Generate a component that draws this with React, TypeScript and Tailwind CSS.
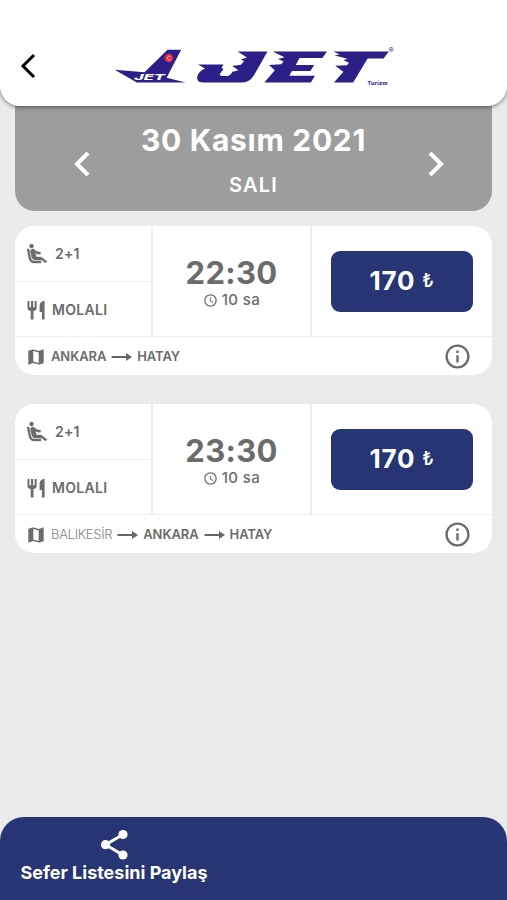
import clsx from 'clsx';
import { MdAccessTime, MdInfoOutline } from 'react-icons/md';

type Stop = { name: string; passed?: boolean };
type Trip = { time: string; duration: string; seats: string; price: string; stops: Stop[] };

const trips: Trip[] = [
  {
    time: '22:30',
    duration: '10 sa',
    seats: '2+1',
    price: '170',
    stops: [{ name: 'ANKARA' }, { name: 'HATAY' }],
  },
  {
    time: '23:30',
    duration: '10 sa',
    seats: '2+1',
    price: '170',
    stops: [{ name: 'BALIKESİR', passed: true }, { name: 'ANKARA' }, { name: 'HATAY' }],
  },
];

function Logo() {
  return (
    <svg width="290" height="48" viewBox="110 42 290 48" fill="#2c1f87">
      {/* Tail fin */}
      <path d="M114.7 69.8 L144.5 72.2 L167.5 49.8 H181.2 L166.6 77.8 L185.7 82.5 H136.8 Z" />
      <circle cx="168.8" cy="58" r="4.3" fill="#e0303a" />
      <path d="M170.6 56.6a2 2 0 1 0 .2 2.8" fill="none" stroke="#fff" strokeWidth="0.8" opacity="0.7" />
      <text
        x="134"
        y="79.8"
        fill="#fff"
        fontSize="8"
        fontWeight="800"
        fontStyle="italic"
        fontFamily="Inter, sans-serif"
        textLength="31"
        lengthAdjust="spacingAndGlyphs"
      >
        JET
      </text>
      {/* Wordmark */}
      <path d="M198 64.4 H223.5 L221.5 68 L223.5 69 L219.8 74.2 Q219.5 76 222 76 H228 Q230 75.8 232.5 71.8 L238.5 70.3 L232.2 66 L241 64.8 L244 61 L241 59.5 L247 57.5 L237.5 51.5 H267.5 L253.5 76 Q249.5 82.6 241 82.6 H204 Q196 82.6 197.3 76.5 Q198.5 71.5 205 68.6 Z" />
      <path d="M272.7 51.5 H327 L322.4 58 H299.5 L295.8 65 H314.2 L310.4 71 H292 L289.3 75.8 H315 L310.8 82.4 H264.4 L274.8 70.2 L269 65 L281.3 64.2 L283.5 61.5 L278 59 L284.5 57.2 Z" />
      <path d="M333.5 51.5 H388.8 L383.6 58.5 H367.6 L353.2 82.6 H334 L343.4 71.8 L335.2 65.8 L347 65.2 L349 62.8 L343.5 60.3 L347.5 58.8 L334.5 55.5 L339.5 54.5 Z" />
      <text x="367.5" y="85.3" fontSize="5.4" fontWeight="800" fontFamily="Inter, sans-serif" textLength="20">
        Turizm
      </text>
      <text x="388.8" y="53.2" fontSize="7" fontWeight="600" fontFamily="Inter, sans-serif">
        ®
      </text>
    </svg>
  );
}

function Chevron({ className, weight = 3.4 }: { className?: string; weight?: number }) {
  return (
    <svg className={className} width="16" height="26" viewBox="0 0 16 26" fill="none" stroke="currentColor" strokeWidth={weight}>
      <path d="M14 2 L3 13 L14 24" />
    </svg>
  );
}

function SeatIcon() {
  return (
    <svg width="24" height="24" viewBox="0 0 24 24" fill="#6d6d6d" stroke="#6d6d6d" strokeWidth="0.4">
      <path d="M5.35 5.64c-.9-.64-1.12-1.88-.49-2.79.63-.9 1.88-1.12 2.79-.49.9.64 1.12 1.88.49 2.79-.64.9-1.88 1.12-2.79.49zM16 19H8.93c-1.48 0-2.74-1.08-2.96-2.54L4 7H2l1.99 9.76C4.37 19.2 6.47 21 8.94 21H16v-2zm.23-4h-4.88l-1.03-4.1c1.58.89 3.28 1.54 5.15 1.22V9.99c-1.63.31-3.44-.27-4.69-1.25L9.14 7.47c-.23-.18-.49-.3-.76-.38-.32-.09-.66-.12-.99-.06h-.02c-1.23.22-2.05 1.39-1.84 2.61l1.35 5.92C7.16 16.98 8.39 18 9.83 18h6.85l3.82 3 1.5-1.5-5.77-4.5z" />
    </svg>
  );
}

function CutleryIcon() {
  return (
    <svg width="18" height="20" viewBox="0 0 18 20" fill="#6d6d6d">
      <path d="M.5 1h2v6.200h1.500V1h2.200v6.200h1.500V1h2v7c0 1.600-1.200 2.700-3.200 3v8.400H3.700V11C1.700 10.700.500 9.600.500 8Z" />
      <path d="M17.600.800v18.600h-2.700V12h-2.300V6C12.600 3.200 14.800.900 17.600.800Z" />
    </svg>
  );
}

function MapIcon() {
  return (
    <svg width="16" height="16" viewBox="0 0 16 16" fill="none" stroke="#6d6d6d" strokeWidth="1.5">
      <path d="M.3 1.800 5.300.300V14L.300 15.700ZM10.700 2 15.700.300V14.200L10.700 15.700Z" fill="#6d6d6d" stroke="none" />
      <path d="M5 1.100 11 2.800M5 13.200 11 14.900" />
    </svg>
  );
}

function RouteArrow() {
  return (
    <svg width="21" height="10" viewBox="0 0 21 10" fill="#666">
      <path d="M.5 3.900h14.500V.900L21 5l-6 4.100v-3H.500Z" />
    </svg>
  );
}

function TripCard({ trip }: { trip: Trip }) {
  return (
    <div className="h-[149px] overflow-hidden rounded-[19px] bg-white text-[#6b6b6b]">
      <div className="flex h-[111px] border-b border-[#eeeeee]">
        <div className="w-[138px] border-r-2 border-[#eeeeee]">
          <div className="flex h-14 items-center border-b border-[#eeeeee] pl-[10px]">
            <SeatIcon />
            <span className="ml-[6px] text-[14px] font-semibold tracking-[0.2px]">{trip.seats}</span>
          </div>
          <div className="flex h-[55px] items-center pl-3">
            <CutleryIcon />
            <span className="ml-[7px] text-[14px] font-semibold tracking-[0.3px]">MOLALI</span>
          </div>
        </div>

        <div className="flex w-[159px] flex-col items-center border-r-2 border-[#eeeeee] pt-[28px]">
          <div className="h-9 text-[31px] font-bold leading-[38px] tracking-[0.3px]">{trip.time}</div>
          <div className="flex items-center gap-1 text-[15px] font-medium leading-5 tracking-[0.4px]">
            <MdAccessTime size={15} />
            {trip.duration}
          </div>
        </div>

        <div className="flex flex-1 items-start pl-[19px] pt-[25px]">
          <button className="flex h-[61px] w-[142px] items-center justify-center rounded-[9px] bg-[#273574] pb-[2px] text-[26px] font-bold tracking-[0.7px] text-white">
            {trip.price}
            <span className="ml-[7px] mt-[2px] text-[19px] font-medium">₺</span>
          </button>
        </div>
      </div>

      <div className="flex h-[38px] items-center pl-[13px] pr-5 pt-px">
        <MapIcon />
        <div className="ml-[7px] flex items-center gap-[5px] text-[13px]">
          {trip.stops.map((stop, i) => (
            <div key={stop.name} className="flex items-center gap-[5px]">
              {i > 0 && <RouteArrow />}
              <span className={clsx(stop.passed ? 'font-light tracking-[-0.3px] text-[#858585]' : 'font-semibold tracking-[-0.1px]')}>
                {stop.name}
              </span>
            </div>
          ))}
        </div>
        <MdInfoOutline size={29} className="ml-auto" />
      </div>
    </div>
  );
}

export default function App() {
  return (
    <div className="flex h-[900px] w-[507px] flex-col overflow-hidden bg-[#ebebeb] font-['Inter',sans-serif]">
      <header className="z-10 flex h-[106px] shrink-0 items-start rounded-b-[20px] bg-white shadow-[0_1px_4px_rgba(0,0,0,0.5)]">
        <Chevron className="ml-5 mt-[53px] text-black" weight={3} />
        <div className="ml-[74px] mt-[42px]">
          <Logo />
        </div>
      </header>

      {/* Day picker */}
      <div className="mx-[15px] flex h-[105px] shrink-0 items-center justify-between rounded-b-[20px] bg-[#9d9d9d] pl-[59px] pr-[48px] text-white">
        <Chevron className="mt-[10px]" weight={4} />
        <div className="mr-[11px] mt-[2px] text-center">
          <div className="text-[30px] font-bold leading-9 tracking-[0.7px]">30 Kasım 2021</div>
          <div className="mt-[15px] text-[20px] font-semibold leading-6 tracking-[1.2px]">SALI</div>
        </div>
        <Chevron className="mt-[10px] rotate-180" weight={4} />
      </div>

      <main className="flex flex-1 flex-col gap-[29px] px-[15px] pt-[15px]">
        {trips.map((trip) => (
          <TripCard key={trip.time} trip={trip} />
        ))}
      </main>

      <footer className="h-[83px] shrink-0 rounded-t-[24px] bg-[#273574] pl-5 text-white">
        <div className="flex w-[188px] flex-col items-center pt-3">
          <svg width="28" height="32" viewBox="0 0 28 32" fill="#fff" stroke="#fff">
            <path d="M23 5.500 L5.500 15.700 L23 26" fill="none" strokeWidth="3" />
            <circle cx="23" cy="5.500" r="4.600" stroke="none" />
            <circle cx="5.500" cy="15.700" r="4.600" stroke="none" />
            <circle cx="23" cy="26" r="4.600" stroke="none" />
          </svg>
          <span className="whitespace-nowrap text-[18px] font-bold leading-6">Sefer Listesini Paylaş</span>
        </div>
      </footer>
    </div>
  );
}
